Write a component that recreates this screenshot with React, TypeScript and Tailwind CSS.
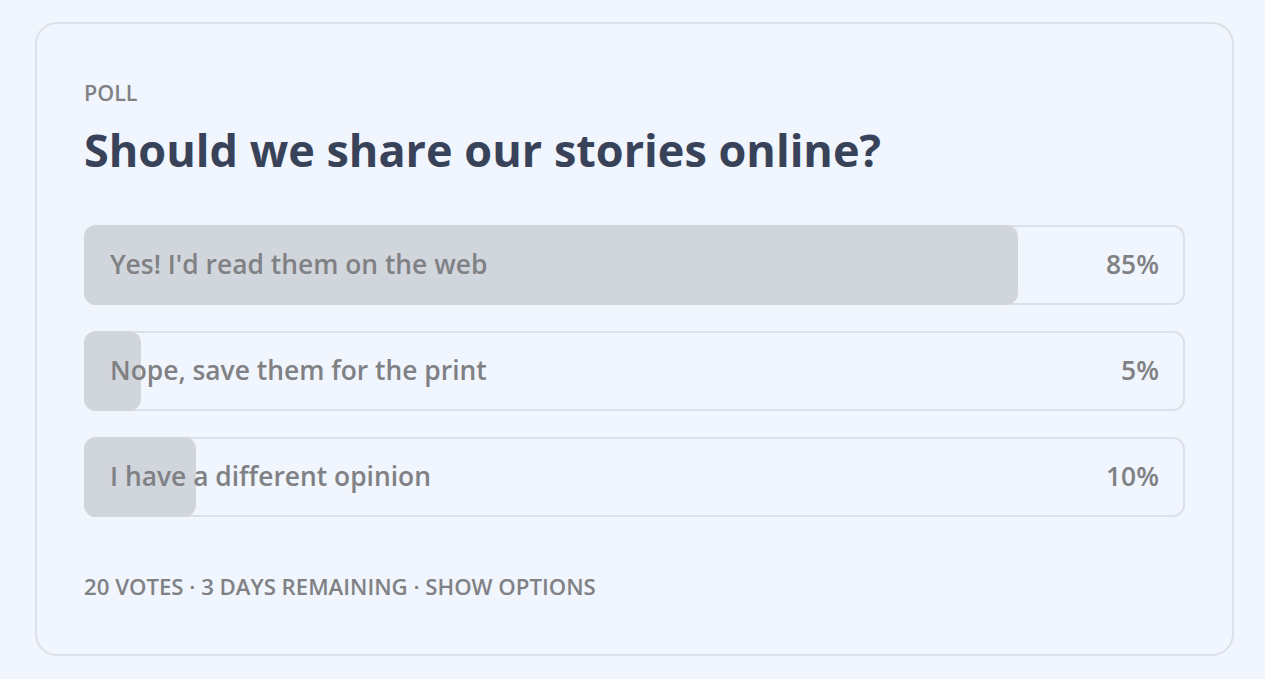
import * as React from "react";

// Poll results card

const options = [
  { label: "Yes! I'd read them on the web", pct: 85 },
  { label: "Nope, save them for the print", pct: 5 },
  { label: "I have a different opinion", pct: 10 },
];

function OptionRow({ label, pct }: { label: string; pct: number }) {
  return (
    <div className="relative flex h-[80px] items-center justify-between rounded-[12px] border-2 border-[#dce0e8] px-[24px]">
      <div
        className="absolute -top-[2px] -bottom-[2px] -left-[2px] rounded-[12px] bg-[#d1d5dc]"
        style={{ width: `calc(${pct}% + 2px)` }}
      />
      <span className="relative text-[26.4px] font-semibold text-[#808184]">{label}</span>
      <span className="relative text-[26.4px] font-semibold text-[#808184]">{pct}%</span>
    </div>
  );
}

export default function App() {
  return (
    <div
      className="min-h-screen bg-[#f0f5fe] pl-[35px] pr-[31px] pt-[22px] pb-[23px]"
      style={{ fontFamily: '"Open Sans", "Noto Sans", sans-serif' }}
    >
      <div className="rounded-[22px] border-2 border-[#dce0e8] px-[47px] pt-[55px] pb-[53px]">
        <p className="text-[21.5px] leading-[28px] font-semibold text-[#808184]">POLL</p>
        <h1 className="mt-[13px] text-[45px] leading-[60px] font-bold text-[#384359]">
          Should we share our stories online?
        </h1>
        <div className="mt-[45px] flex flex-col gap-[26px]">
          {options.map((o) => (
            <OptionRow key={o.label} {...o} />
          ))}
        </div>
        <p className="mt-[56px] text-[22.2px] leading-[28px] font-semibold text-[#808184]">
          20 VOTES · 3 DAYS REMAINING · SHOW OPTIONS
        </p>
      </div>
    </div>
  );
}
